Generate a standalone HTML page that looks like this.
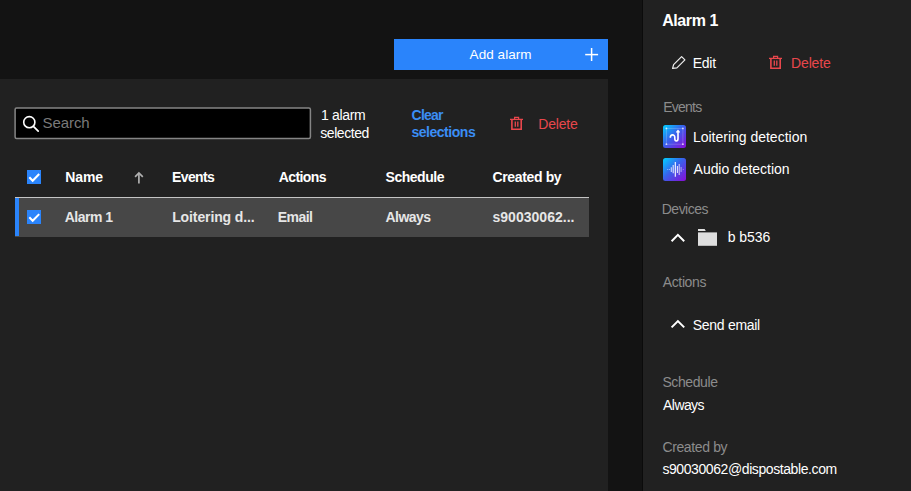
<!DOCTYPE html>
<html><head><meta charset="utf-8">
<style>
html,body{margin:0;padding:0;}
body{width:911px;height:491px;overflow:hidden;position:relative;background:#131313;font-family:"Liberation Sans",sans-serif;}
.abs{position:absolute;}
.t{position:absolute;white-space:nowrap;line-height:20px;}
#panel{left:0;top:79px;width:608px;height:412px;background:#212121;}
#btn{left:394px;top:39px;width:214px;height:31px;background:#2a84fb;}
#bx-search{left:15px;top:108px;width:294px;height:30px;border:1px solid #8a8a8a;background:#000;}
#hline{left:15px;top:197px;width:574px;height:1px;background:#c4c4c4;}
#row{left:15px;top:198px;width:574px;height:39px;background:#474747;}
#rowbar{left:15px;top:198px;width:4px;height:38px;background:#2a84fb;}
#side{left:642px;top:0;width:269px;height:491px;background:#212121;}
#sideb{left:642px;top:0;width:1px;height:491px;background:#0b0b0b;}
.cb{position:absolute;width:14px;height:14px;background:#2a84fb;}
svg{position:absolute;overflow:visible;}
</style></head><body>
<div class="abs" id="panel"></div>
<div class="abs" id="btn"></div>
<div class="abs" id="hline"></div>
<div class="abs" id="row"></div>
<div class="abs" id="rowbar"></div>
<div class="abs" id="side"></div>
<div class="abs" id="sideb"></div>
<svg width="911" height="491" style="left:0;top:0" viewBox="0 0 911 491">
 <defs>
  <linearGradient id="g1" x1="0" y1="0" x2="1" y2="1">
   <stop offset="0" stop-color="#00d2ff"/>
   <stop offset="0.45" stop-color="#3763ec"/>
   <stop offset="1" stop-color="#8a0bd6"/>
  </linearGradient>
 </defs>
 <rect x="15.1" y="108" width="295.3" height="30.4" rx="1.5" fill="#000" stroke="#858585" stroke-width="1.5"/>
 <!-- search icon -->
 <circle cx="29.3" cy="122.2" r="5.6" fill="none" stroke="#fff" stroke-width="1.6"/>
 <line x1="33.4" y1="126.3" x2="38.2" y2="131.1" stroke="#fff" stroke-width="1.7" stroke-linecap="round"/>
 <!-- plus -->
 <line x1="585.2" y1="54.6" x2="598.1" y2="54.6" stroke="#fff" stroke-width="1.5"/>
 <line x1="591.6" y1="48" x2="591.6" y2="61" stroke="#fff" stroke-width="1.5"/>
 <!-- trash 1 -->
 <g fill="none" stroke="#e8474c">
  <path d="M514.6,119.2 V117.3 H518.6 V119.2" stroke-width="1.2"/>
  <line x1="510" y1="119.4" x2="523" y2="119.4" stroke-width="1.3"/>
  <path d="M511.9,119.4 V129.2 H521.2 V119.4" stroke-width="1.6"/>
  <line x1="515.3" y1="121.5" x2="515.3" y2="126.8" stroke-width="1.3"/>
  <line x1="517.8" y1="121.5" x2="517.8" y2="126.8" stroke-width="1.3"/>
 </g>
 <!-- trash 2 -->
 <g fill="none" stroke="#e8474c" transform="translate(259,-61)">
  <path d="M514.6,119.2 V117.3 H518.6 V119.2" stroke-width="1.2"/>
  <line x1="510" y1="119.4" x2="523" y2="119.4" stroke-width="1.3"/>
  <path d="M511.9,119.4 V129.2 H521.2 V119.4" stroke-width="1.6"/>
  <line x1="515.3" y1="121.5" x2="515.3" y2="126.8" stroke-width="1.3"/>
  <line x1="517.8" y1="121.5" x2="517.8" y2="126.8" stroke-width="1.3"/>
 </g>
 <!-- checkboxes -->
 <rect x="27" y="170" width="14" height="14" fill="#2a84fb"/>
 <path d="M29.3,177.3 L32.7,180.8 L39.2,174.1" fill="none" stroke="#fff" stroke-width="2.1"/>
 <rect x="27" y="210" width="14" height="14" fill="#2a84fb"/>
 <path d="M29.3,217.3 L32.7,220.8 L39.2,214.1" fill="none" stroke="#fff" stroke-width="2"/>
 <!-- sort arrow -->
 <g stroke="#b0b0b0" stroke-width="1.7" fill="none">
  <line x1="138.9" y1="173" x2="138.9" y2="183.6"/>
  <path d="M135.1,176.8 L138.9,172.9 L142.8,176.8"/>
 </g>
 <!-- pencil -->
 <path d="M672.6,68.4 L673.6,64.6 L681.6,56.6 L684.9,59.9 L676.9,67.9 Z" fill="none" stroke="#eee" stroke-width="1.2" stroke-linejoin="round"/>
 <!-- loitering icon -->
 <rect x="663" y="125" width="23" height="23" rx="2.5" fill="url(#g1)"/>
 <rect x="666.4" y="128.4" width="16.5" height="15.8" fill="none" stroke="rgba(255,255,255,0.22)" stroke-width="0.9"/>
 <g fill="rgba(255,255,255,0.75)"><circle cx="666.4" cy="128.4" r="0.9"/><circle cx="682.9" cy="128.4" r="0.9"/><circle cx="666.4" cy="144.2" r="0.9"/><circle cx="682.9" cy="144.2" r="0.9"/></g>
 <path d="M670.3,137.8 C670.3,134 674.8,134 674.8,137.5 V138.5 C674.8,141.8 678,141.8 678,138.5 V131.6" fill="none" stroke="#fff" stroke-width="1.6"/>
 <path d="M676.5,132.5 L678,130.7 L679.5,132.5" fill="none" stroke="#fff" stroke-width="1.4"/>
 <!-- audio icon -->
 <rect x="663" y="158" width="23" height="23" rx="2.5" fill="url(#g1)"/>
 <g stroke="#fff" stroke-width="1.1">
  <line x1="671.3" y1="167.2" x2="671.3" y2="172.1" stroke-opacity="0.75"/>
  <line x1="673.2" y1="165.1" x2="673.2" y2="173.3" stroke-opacity="0.85"/>
  <line x1="675.3" y1="162" x2="675.3" y2="176.7"/>
  <line x1="677.4" y1="166" x2="677.4" y2="173" stroke-opacity="0.85"/>
  <line x1="679.2" y1="163.9" x2="679.2" y2="174.9" stroke-opacity="0.7"/>
  <line x1="681.1" y1="166.9" x2="681.1" y2="172.1" stroke-opacity="0.5"/>
  <line x1="667.6" y1="168.9" x2="667.6" y2="170" stroke-opacity="0.4"/>
  <line x1="669.4" y1="168.9" x2="669.4" y2="170" stroke-opacity="0.5"/>
  <line x1="683.3" y1="168.9" x2="683.3" y2="170" stroke-opacity="0.35"/>
 </g>
 <!-- chevrons -->
 <path d="M671.6,241.2 L677.9,234.9 L684.2,241.2" fill="none" stroke="#fff" stroke-width="2"/>
 <path d="M671.6,327.4 L677.9,321.1 L684.2,327.4" fill="none" stroke="#fff" stroke-width="2"/>
 <!-- folder -->
 <path d="M698,229 H704.6 L705.8,231 H698 Z" fill="#e0e0e0"/>
 <rect x="698" y="232.4" width="19" height="13.4" fill="#dedede"/>
</svg>
<div class="t" id="search" style="left:42.60px;top:113.20px;font-size:15px;font-weight:400;letter-spacing:-0.100px;color:#7a7a7a">Search</div>
<div class="t" id="alarm1sel" style="left:321.00px;top:104.70px;font-size:14px;font-weight:400;letter-spacing:-0.333px;color:#ffffff">1 alarm</div>
<div class="t" id="selected" style="left:320.30px;top:122.60px;font-size:14px;font-weight:400;letter-spacing:-0.443px;color:#ffffff">selected</div>
<div class="t" id="clear" style="left:411.60px;top:104.70px;font-size:14px;font-weight:700;letter-spacing:-0.775px;color:#3b8ef5">Clear</div>
<div class="t" id="selections" style="left:411.40px;top:122.10px;font-size:14px;font-weight:700;letter-spacing:-0.467px;color:#3b8ef5">selections</div>
<div class="t" id="delete1" style="left:538.30px;top:113.70px;font-size:14px;font-weight:400;letter-spacing:-0.180px;color:#e8474c">Delete</div>
<div class="t" id="addalarm" style="left:469.60px;top:45.40px;font-size:13.5px;font-weight:400;letter-spacing:0.062px;color:#ffffff">Add alarm</div>
<div class="t" id="h_name" style="left:65.20px;top:167.30px;font-size:14px;font-weight:700;letter-spacing:-0.067px;color:#ffffff">Name</div>
<div class="t" id="h_events" style="left:172.00px;top:167.30px;font-size:14px;font-weight:700;letter-spacing:-0.620px;color:#ffffff">Events</div>
<div class="t" id="h_actions" style="left:278.70px;top:167.30px;font-size:14px;font-weight:700;letter-spacing:-0.583px;color:#ffffff">Actions</div>
<div class="t" id="h_sched" style="left:385.60px;top:167.30px;font-size:14px;font-weight:700;letter-spacing:-0.486px;color:#ffffff">Schedule</div>
<div class="t" id="h_created" style="left:492.50px;top:167.30px;font-size:14px;font-weight:700;letter-spacing:-0.356px;color:#ffffff">Created by</div>
<div class="t" id="r_name" style="left:64.80px;top:206.70px;font-size:14px;font-weight:700;letter-spacing:-0.533px;color:#e6e6e6">Alarm 1</div>
<div class="t" id="r_events" style="left:172.20px;top:206.70px;font-size:14px;font-weight:700;letter-spacing:-0.115px;color:#e6e6e6">Loitering d...</div>
<div class="t" id="r_actions" style="left:277.80px;top:206.70px;font-size:14px;font-weight:700;letter-spacing:-0.550px;color:#e6e6e6">Email</div>
<div class="t" id="r_sched" style="left:385.50px;top:206.70px;font-size:14px;font-weight:700;letter-spacing:-0.560px;color:#e6e6e6">Always</div>
<div class="t" id="r_created" style="left:492.50px;top:206.70px;font-size:14px;font-weight:700;letter-spacing:0.018px;color:#e6e6e6">s90030062...</div>
<div class="t" id="p_title" style="left:662.20px;top:10.60px;font-size:16px;font-weight:700;letter-spacing:-0.417px;color:#ffffff">Alarm 1</div>
<div class="t" id="p_edit" style="left:692.80px;top:52.80px;font-size:14px;font-weight:400;letter-spacing:-0.300px;color:#ffffff">Edit</div>
<div class="t" id="p_delete" style="left:791.10px;top:53.00px;font-size:14px;font-weight:400;letter-spacing:-0.160px;color:#e8474c">Delete</div>
<div class="t" id="p_events" style="left:663.20px;top:96.60px;font-size:14px;font-weight:400;letter-spacing:-0.760px;color:#8c8c8c">Events</div>
<div class="t" id="p_loiter" style="left:692.90px;top:126.70px;font-size:14px;font-weight:400;letter-spacing:-0.006px;color:#ffffff">Loitering detection</div>
<div class="t" id="p_audio" style="left:693.60px;top:159.10px;font-size:14px;font-weight:400;letter-spacing:-0.043px;color:#ffffff">Audio detection</div>
<div class="t" id="p_devices" style="left:661.80px;top:199.00px;font-size:14px;font-weight:400;letter-spacing:-0.533px;color:#8c8c8c">Devices</div>
<div class="t" id="p_bb536" style="left:727.80px;top:226.90px;font-size:14px;font-weight:400;letter-spacing:-0.060px;color:#ffffff">b b536</div>
<div class="t" id="p_actions" style="left:662.80px;top:272.10px;font-size:14px;font-weight:400;letter-spacing:-0.383px;color:#8c8c8c">Actions</div>
<div class="t" id="p_send" style="left:692.70px;top:314.60px;font-size:14px;font-weight:400;letter-spacing:-0.278px;color:#ffffff">Send email</div>
<div class="t" id="p_sched" style="left:662.40px;top:371.80px;font-size:14px;font-weight:400;letter-spacing:-0.400px;color:#8c8c8c">Schedule</div>
<div class="t" id="p_always" style="left:663.10px;top:394.50px;font-size:14px;font-weight:400;letter-spacing:-0.580px;color:#ffffff">Always</div>
<div class="t" id="p_created" style="left:662.40px;top:436.70px;font-size:14px;font-weight:400;letter-spacing:-0.367px;color:#8c8c8c">Created by</div>
<div class="t" id="p_email" style="left:662.40px;top:459.20px;font-size:14px;font-weight:400;letter-spacing:-0.412px;color:#ffffff">s90030062@dispostable.com</div>
</body></html>
